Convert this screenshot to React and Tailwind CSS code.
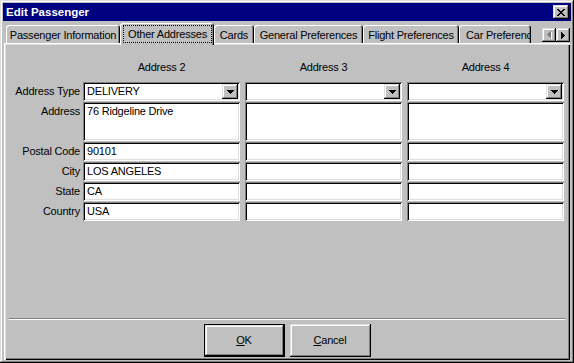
import React from "react"

const raised = "bg-[#c0c0c0] shadow-[inset_-1px_-1px_#000,inset_1px_1px_#dfdfdf,inset_-2px_-2px_#808080,inset_2px_2px_#fff]"
const sunken = "bg-white shadow-[inset_1px_1px_#808080,inset_-1px_-1px_#fff,inset_2px_2px_#000,inset_-2px_-2px_#dfdfdf]"

const xRows = [
    [0, 2], [6, 2],
    [1, 2], [5, 2],
    [2, 4],
    [3, 2],
    [2, 4],
    [1, 2], [5, 2],
    [0, 2], [6, 2],
]
const xYs = [0, 0, 1, 1, 2, 3, 4, 5, 5, 6, 6]

const CloseGlyph = () => (
    <svg width="8" height="7" viewBox="0 0 8 7">
        {xRows.map(([x, w], i) => (
            <rect key={i} x={x} y={xYs[i]} width={w} height="1" fill="#000" />
        ))}
    </svg>
)

const DownGlyph = () => (
    <svg width="7" height="4" viewBox="0 0 7 4">
        <path d="M0 0h7v1H6v1H5v1H4v1H3V3H2V2H1V1H0z" fill="#000" />
    </svg>
)

const Tab = ({ w, active, left, children }) => {
    if (active) {
        return (
            <div className={`${w} h-[22px] -mb-[2px] relative z-10 shrink-0 bg-[#c0c0c0] rounded-t-[3px] shadow-[inset_1px_1px_#fff,inset_-1px_0_#000,inset_-2px_0_#808080] pl-[3px] pr-[2px] pt-[2px] pb-[2px] flex`}>
                <div className="flex-1 border border-dotted border-black flex items-center justify-center whitespace-nowrap">
                    {children}
                </div>
            </div>
        )
    }
    return (
        <div className={`${w} h-[18px] shrink-0 bg-[#c0c0c0] rounded-t-[3px] shadow-[inset_1px_1px_#fff,inset_-1px_0_#000,inset_-2px_0_#808080] pt-[3px] flex items-center whitespace-nowrap ${left ? 'justify-start pl-[7px]' : 'justify-center'}`}>
            {children}
        </div>
    )
}

const Field = ({ value, tall }) => (
    <div className={`w-[157px] ${tall ? 'h-[39px] items-start pt-[3px]' : 'h-[19px] items-center'} ${sunken} flex pl-[4px] whitespace-nowrap`}>
        {value}
    </div>
)

const Combo = ({ value }) => (
    <div className={`w-[157px] h-[19px] ${sunken} flex items-center pl-[4px] pr-[2px]`}>
        <span className="flex-1 whitespace-nowrap">{value}</span>
        <div className={`w-[16px] h-[15px] ${raised} flex items-center justify-center`}>
            <DownGlyph />
        </div>
    </div>
)

const Row = ({ label, top, children }) => (
    <div className={`flex ${top ? 'items-start' : 'items-center'}`}>
        <div className={`w-[74px] mr-[3px] text-right whitespace-nowrap ${top ? 'pt-[3px]' : ''}`}>{label}</div>
        <div className="flex gap-[5px]">{children}</div>
    </div>
)

const rows = [
    ["Postal Code", "90101"],
    ["City", "LOS ANGELES"],
    ["State", "CA"],
    ["Country", "USA"],
]

export default function App() {
    return (
        <div className="w-[574px] h-[363px] bg-[#c0c0c0] p-[3px] flex flex-col text-[11px] leading-[13px] text-black tracking-[-0.2px] font-['Liberation_Sans',Arial,sans-serif] shadow-[inset_-1px_-1px_#000,inset_1px_1px_#dfdfdf,inset_-2px_-2px_#808080,inset_2px_2px_#fff]">
            {/* title bar */}
            <div className="h-[18px] shrink-0 bg-[#000080] flex items-center pl-[3px] pr-[2px]">
                <span className="flex-1 text-white font-bold text-[11.5px] tracking-normal">Edit Passenger</span>
                <div className={`w-[16px] h-[14px] ${raised} flex items-center justify-center`}>
                    <CloseGlyph />
                </div>
            </div>

            {/* tabs */}
            <div className="h-[22px] shrink-0 flex items-end">
                <div className="w-[528px] h-full pl-[3px] flex items-end overflow-x-clip">
                    <Tab w="w-[114px]">Passenger Information</Tab>
                    <Tab w="w-[94px]" active>Other Addresses</Tab>
                    <Tab w="w-[40px]">Cards</Tab>
                    <Tab w="w-[109px]">General Preferences</Tab>
                    <Tab w="w-[96px]">Flight Preferences</Tab>
                    <Tab w="w-[72px]" left>Car Preferenc</Tab>
                </div>
                <div className="ml-auto mr-[1px] mb-[1px] flex">
                    <div className={`w-[14px] h-[14px] ${raised} flex items-center justify-center`}>
                        <svg width="5" height="8" viewBox="0 0 5 8">
                            <path transform="translate(1 1)" d="M4 0v7H3V6H2V5H1V4H0V3h1V2h1V1h1V0z" fill="#fff" />
                            <path d="M4 0v7H3V6H2V5H1V4H0V3h1V2h1V1h1V0z" fill="#808080" />
                        </svg>
                    </div>
                    <div className={`w-[14px] h-[14px] ${raised} flex items-center justify-center`}>
                        <svg width="4" height="7" viewBox="0 0 4 7">
                            <path d="M0 0h1v1h1v1h1v1h1v1H3v1H2v1H1v1H0z" fill="#000" />
                        </svg>
                    </div>
                </div>
            </div>

            {/* panel */}
            <div className="flex-1 mx-[1px] p-[2px] flex flex-col shadow-[inset_1px_1px_#fff,inset_2px_2px_#dfdfdf,inset_-1px_-1px_#000,inset_-2px_-2px_#808080]">
                <div className="pt-[16px]">
                    <div className="flex h-[13px] pl-[77px] gap-[5px]">
                        {["Address 2", "Address 3", "Address 4"].map((h) => (
                            <div key={h} className="w-[157px] text-center">{h}</div>
                        ))}
                    </div>
                    <div className="mt-[8px] flex flex-col gap-[1px]">
                        <Row label="Address Type">
                            <Combo value="DELIVERY" />
                            <Combo />
                            <Combo />
                        </Row>
                        <Row label="Address" top>
                            <Field tall value="76 Ridgeline Drive" />
                            <Field tall />
                            <Field tall />
                        </Row>
                        {rows.map(([label, value]) => (
                            <Row key={label} label={label}>
                                <Field value={value} />
                                <Field />
                                <Field />
                            </Row>
                        ))}
                    </div>
                </div>

                <div className="flex-1" />

                <div className="mx-[3px] h-[2px] border-t border-t-[#808080] border-b border-b-white" />

                <div className="pt-[4px] pb-[1px] flex justify-center gap-[5px]">
                    <div className="w-[81px] h-[33px] border border-black">
                        <div className={`w-full h-full ${raised} flex items-center justify-center`}>
                            <span><span className="underline underline-offset-1">O</span>K</span>
                        </div>
                    </div>
                    <div className={`w-[81px] h-[33px] ${raised} flex items-center justify-center`}>
                        <span><span className="underline underline-offset-1">C</span>ancel</span>
                    </div>
                </div>
            </div>
        </div>
    )
}
